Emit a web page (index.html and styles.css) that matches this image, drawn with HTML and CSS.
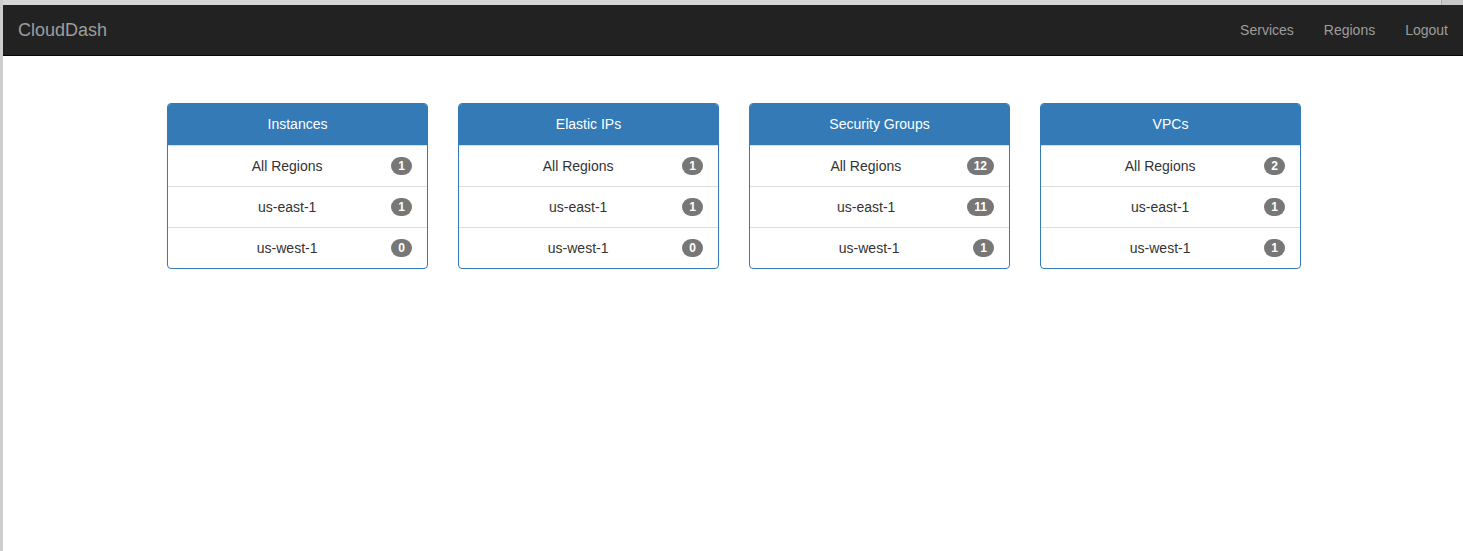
FILE: index.html
```html
<!DOCTYPE html>
<html>
<head>
<meta charset="utf-8">
<title>CloudDash</title>
<link rel="stylesheet" href="styles.css">
</head>
<body>
<div class="chrome"><div class="chrome-fill"></div><div class="chrome-end"></div></div>
<nav class="navbar">
  <a class="brand" href="#">CloudDash</a>
  <ul class="nav">
    <li><a href="#">Services</a></li>
    <li><a href="#">Regions</a></li>
    <li><a href="#">Logout</a></li>
  </ul>
</nav>
<main class="content">
  <div class="grid">
    <section class="panel">
      <h3 class="panel-heading">Instances</h3>
      <ul class="list">
        <li class="item"><span class="badge">1</span>All Regions</li>
        <li class="item"><span class="badge">1</span>us-east-1</li>
        <li class="item"><span class="badge">0</span>us-west-1</li>
      </ul>
    </section>
    <section class="panel">
      <h3 class="panel-heading">Elastic IPs</h3>
      <ul class="list">
        <li class="item"><span class="badge">1</span>All Regions</li>
        <li class="item"><span class="badge">1</span>us-east-1</li>
        <li class="item"><span class="badge">0</span>us-west-1</li>
      </ul>
    </section>
    <section class="panel">
      <h3 class="panel-heading">Security Groups</h3>
      <ul class="list">
        <li class="item"><span class="badge">12</span>All Regions</li>
        <li class="item"><span class="badge">11</span>us-east-1</li>
        <li class="item"><span class="badge">1</span>us-west-1</li>
      </ul>
    </section>
    <section class="panel">
      <h3 class="panel-heading">VPCs</h3>
      <ul class="list">
        <li class="item"><span class="badge">2</span>All Regions</li>
        <li class="item"><span class="badge">1</span>us-east-1</li>
        <li class="item"><span class="badge">1</span>us-west-1</li>
      </ul>
    </section>
  </div>
</main>
</body>
</html>
```

FILE: styles.css
```css
* { box-sizing: border-box; }
html, body { height: 100%; }
body {
  margin: 0;
  font-family: "Liberation Sans", Arial, Helvetica, sans-serif;
  font-size: 14px;
  line-height: 20px;
  color: #333;
  background: #fff;
  border-left: 3px solid #cdcdcd;
}
.chrome {
  display: flex;
  height: 5px;
  background: #d6d6d6;
}
.chrome-fill { flex: 1; }
.chrome-end {
  width: 22px;
  background: #c9c9c9;
  border-left: 1px solid #a9a9a9;
}
.navbar {
  display: flex;
  align-items: center;
  justify-content: space-between;
  height: 51px;
  background: #222;
  border-bottom: 1px solid #080808;
}
.brand {
  padding: 15px;
  font-size: 18px;
  line-height: 20px;
  color: #9d9d9d;
  text-decoration: none;
}
.nav {
  display: flex;
  list-style: none;
  margin: 0;
  padding: 0;
}
.nav a {
  display: block;
  padding: 15px;
  line-height: 20px;
  color: #9d9d9d;
  text-decoration: none;
}
.content {
  padding: 47px 0 0 2px;
}
.grid {
  display: grid;
  grid-template-columns: repeat(4, 261px);
  column-gap: 30px;
  justify-content: center;
}
.panel {
  border: 1px solid #337ab7;
  border-radius: 4px;
  overflow: hidden;
  background: #fff;
}
.panel-heading {
  margin: 0;
  height: 41px;
  padding: 10px 15px;
  background: #337ab7;
  color: #fff;
  font-size: 14px;
  font-weight: normal;
  line-height: 21px;
  text-align: center;
}
.list {
  list-style: none;
  margin: 0;
  padding: 0;
}
.item {
  padding: 10px 15px;
  line-height: 20px;
  text-align: center;
  border-top: 1px solid #ddd;
}
.badge {
  float: right;
  margin-top: 1px;
  min-width: 10px;
  padding: 3px 7px;
  font-size: 12px;
  font-weight: bold;
  line-height: 12px;
  color: #fff;
  background: #777;
  border-radius: 10px;
  text-align: center;
}
```
